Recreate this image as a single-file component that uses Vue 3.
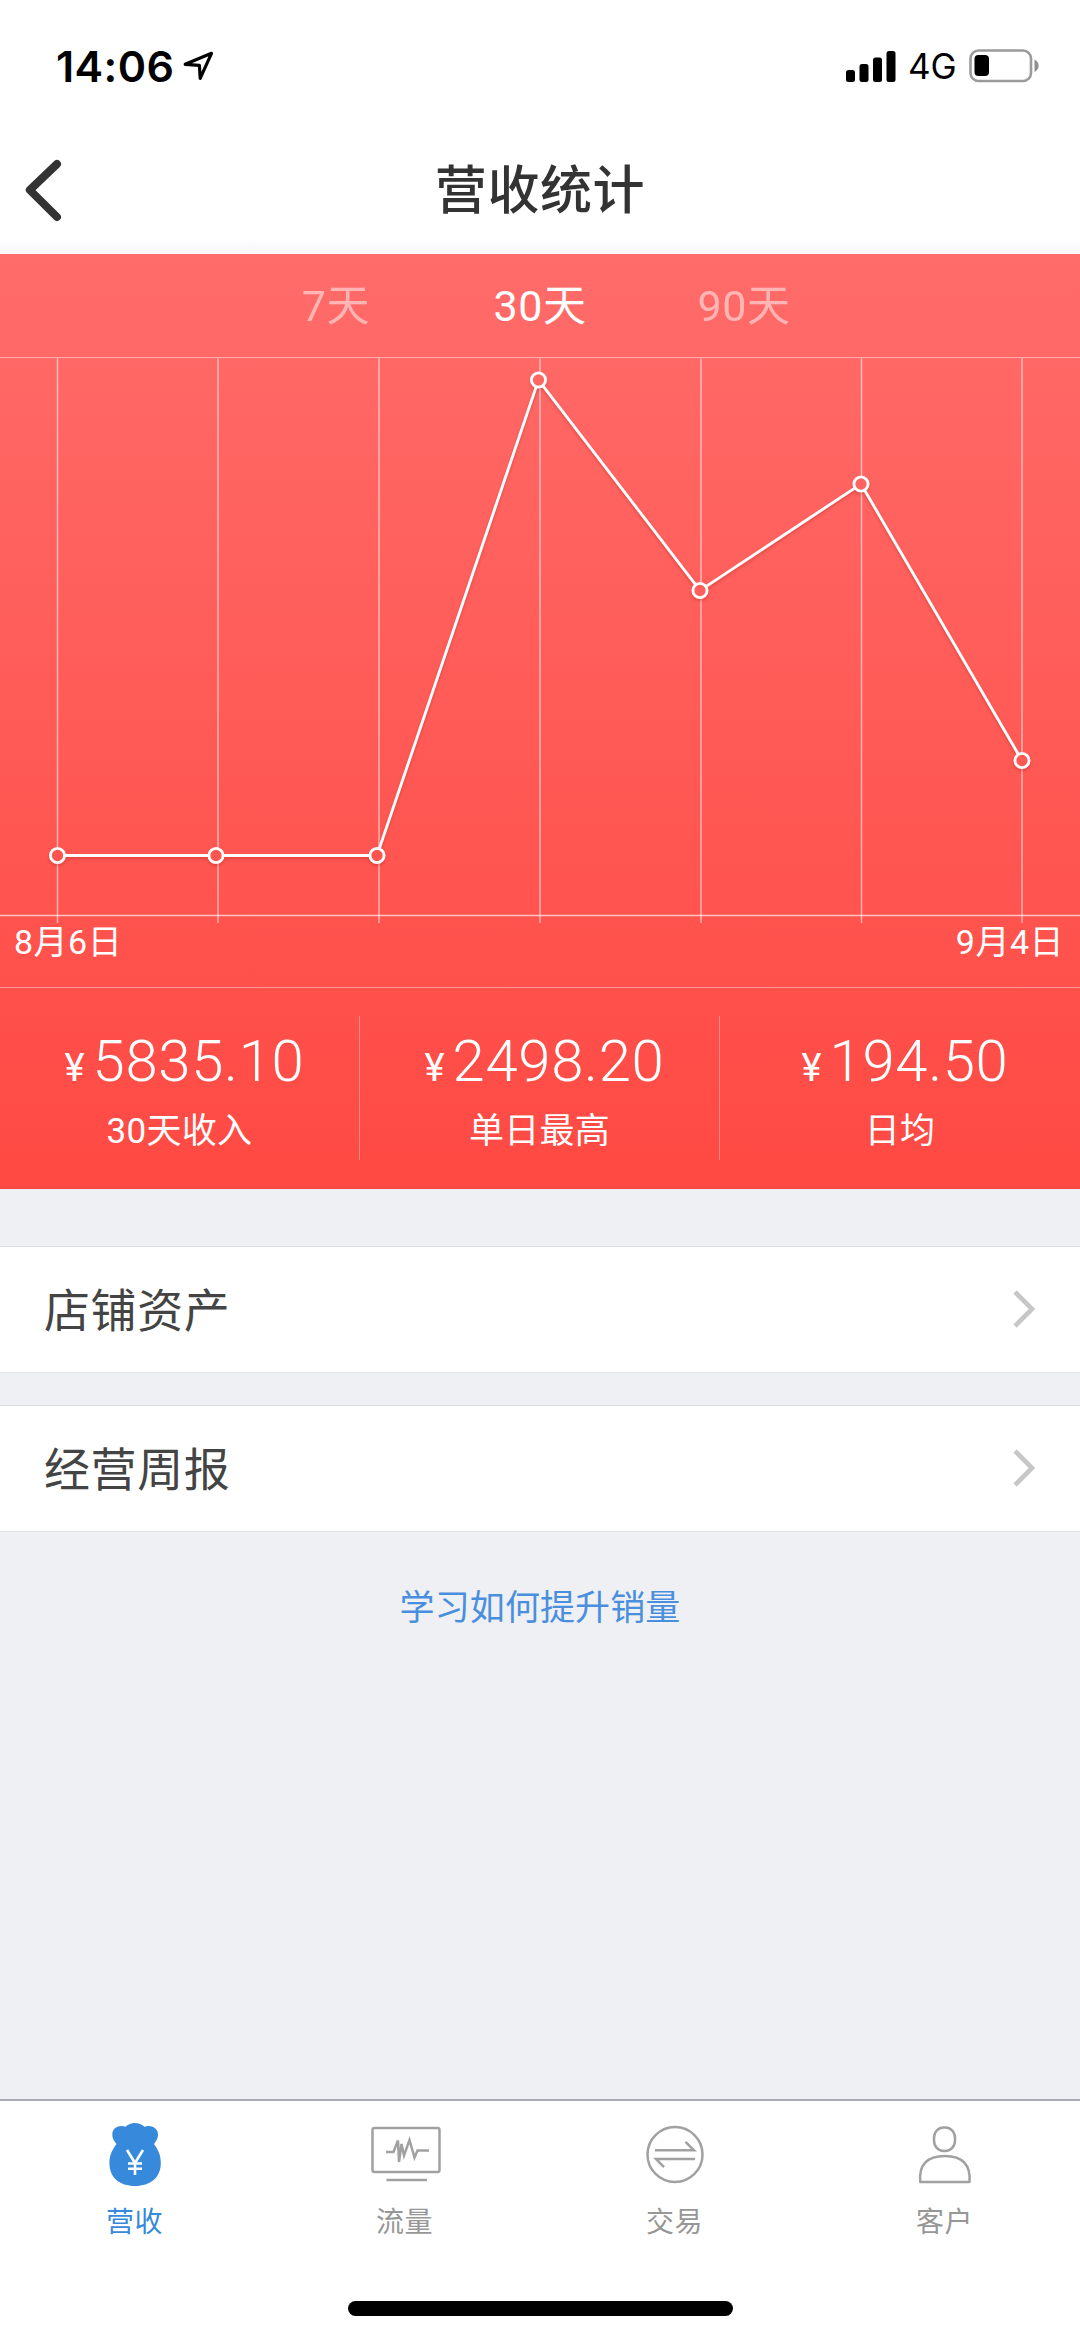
<script setup>
import { computed, ref } from 'vue'

const ranges = ['7天', '30天', '90天']
const activeRange = ref(1)

const gridX = [57.5, 218, 379, 540, 701, 861.5, 1022]
const points = [
  { x: 57.5, y: 497.5 },
  { x: 216, y: 497.5 },
  { x: 377, y: 497.5 },
  { x: 538.5, y: 22 },
  { x: 700, y: 232.5 },
  { x: 861, y: 126 },
  { x: 1022, y: 402.5 },
]

// Marker centres take the panel gradient's colour at their own height.
const markerFill = (y) => {
  const t = (y + 104) / 935
  return `rgb(255, ${Math.round(108 - 35 * t)}, ${Math.round(106 - 39 * t)})`
}

// Segments stop at the rim of each marker so the markers stay hollow.
const segments = computed(() =>
  points.slice(1).map((b, i) => {
    const a = points[i]
    const d = Math.hypot(b.x - a.x, b.y - a.y)
    const ux = ((b.x - a.x) / d) * 7
    const uy = ((b.y - a.y) / d) * 7
    return { x1: a.x + ux, y1: a.y + uy, x2: b.x - ux, y2: b.y - uy }
  }),
)

const stats = [
  { value: '5835.10', label: '30天收入' },
  { value: '2498.20', label: '单日最高' },
  { value: '194.50', label: '日均' },
]
const rows = ['店铺资产', '经营周报']
</script>

<template>
  <div class="screen">
    <div class="status">
      <span class="time">14:06</span>
      <svg class="locate" width="32" height="32" viewBox="0 0 32 32">
        <path d="M2.2 14.3 28.5 3.3 17.2 28.4 16.4 15.4Z" fill="none" stroke="#000" stroke-width="3.2" stroke-linejoin="round" />
      </svg>
      <svg class="signal" width="50" height="31" viewBox="0 0 50 31">
        <rect x="0" y="19" width="9" height="12" rx="2.5" />
        <rect x="13.5" y="13" width="9" height="18" rx="2.5" />
        <rect x="27" y="6.5" width="9" height="24.5" rx="2.5" />
        <rect x="40.5" y="0" width="9" height="31" rx="2.5" />
      </svg>
      <span class="net">4G</span>
      <svg class="battery" width="72" height="34" viewBox="0 0 72 34">
        <rect x="1.5" y="1.5" width="60.5" height="30.5" rx="8" fill="none" stroke="#9b9b9b" stroke-width="2.6" />
        <rect x="5.5" y="6" width="14.5" height="21" rx="4" />
        <path d="M65.5 10.5c5.5 2.5 5.5 10 0 12.5z" fill="#8f8f8f" />
      </svg>
    </div>

    <header class="nav">
      <svg class="back" width="44" height="70" viewBox="0 0 44 70">
        <path d="M36 8 8.8 34 36 61" fill="none" stroke="#333" stroke-width="8" stroke-linecap="round" stroke-linejoin="round" />
      </svg>
      <h1>营收统计</h1>
    </header>

    <section class="panel">
      <div class="ranges">
        <span v-for="(r, i) in ranges" :key="r" class="range" :class="{ on: i === activeRange }">{{ r }}</span>
      </div>
      <svg class="chart" width="1080" height="567" viewBox="0 0 1080 567">
        <g stroke="#fff" stroke-width="1.5" opacity=".55">
          <line v-for="x in gridX" :key="x" :x1="x" y1="0" :x2="x" y2="565" />
        </g>
        <line x1="0" y1="557.5" x2="1080" y2="557.5" stroke="#fff" stroke-width="1.5" opacity=".65" />
        <g class="plot" fill="none" stroke="#fff" stroke-width="2.9">
          <line v-for="(s, i) in segments" :key="i" v-bind="s" />
          <circle v-for="(p, i) in points" :key="i" :cx="p.x" :cy="p.y" r="7.1" :fill="markerFill(p.y)" />
        </g>
      </svg>
      <div class="dates"><span>8月6日</span><span>9月4日</span></div>
      <div class="stats">
        <div v-for="s in stats" :key="s.label" class="stat">
          <div class="amount"><span class="yen">¥</span><span class="num">{{ s.value }}</span></div>
          <div class="caption">{{ s.label }}</div>
        </div>
      </div>
    </section>

    <div class="rows">
      <div v-for="r in rows" :key="r" class="row">
        <span>{{ r }}</span>
        <svg width="26" height="42" viewBox="0 0 26 42">
          <path d="M4 3 21 20 4 37" fill="none" stroke="#c7c7c9" stroke-width="4.6" />
        </svg>
      </div>
    </div>

    <a class="learn">学习如何提升销量</a>

    <nav class="tabs">
      <div class="tab on">
        <svg width="80" height="70" viewBox="0 0 80 70">
          <path d="M17.3 14.6C17.3 7 25 4.5 30.5 6.8 35 1.7 44.8 1.7 49.5 6.8 55 4.5 63 7.3 63 14.6 63 18.5 61.2 21.3 59 24 63.5 30 65.8 35.5 65.8 43 65.8 57.5 55.5 66 40 66S14.4 57.5 14.4 43C14.4 35.5 17 30 21.5 24 19 21.3 17.3 18.5 17.3 14.6Z" fill="#3789dc" />
          <path d="M32 30 40 43 48 30M40 43V55M33 43.5H47M33 48.8H47" fill="none" stroke="#fff" stroke-width="2.6" />
        </svg>
        <span>营收</span>
      </div>
      <div class="tab">
        <svg width="80" height="70" viewBox="0 0 80 70" fill="none" stroke="#a1a1a1" stroke-width="2.5">
          <rect x="7.5" y="8" width="67" height="44" rx="2" />
          <path d="M21 32h7.5L33 20.5 34 42 36.5 24 39 35.5 44.5 20 49.5 37.5 52.5 30.5H64" />
          <path d="M21.5 60H62" />
        </svg>
        <span>流量</span>
      </div>
      <div class="tab">
        <svg width="80" height="70" viewBox="0 0 80 70" fill="none" stroke="#a1a1a1" stroke-width="2.5">
          <circle cx="40" cy="34.5" r="27.5" />
          <path d="M20 30.3H59L50.5 21.8M60 38.9H21L29 47.2" />
        </svg>
        <span>交易</span>
      </div>
      <div class="tab">
        <svg width="80" height="70" viewBox="0 0 80 70" fill="none" stroke="#a1a1a1" stroke-width="2.5">
          <rect x="29" y="7.4" width="21" height="23.6" rx="9.5" ry="10.5" />
          <path d="M15.3 62C13.5 45 22 36 39.8 36S66 45 64.5 62Z" stroke-linejoin="round" />
        </svg>
        <span>客户</span>
      </div>
    </nav>
    <div class="home"><i></i></div>
  </div>
</template>

<style>
body {
  margin: 0;
  background: #eff0f4;
}
</style>

<style scoped>
.screen {
  width: 1080px;
  height: 2339px;
  display: flex;
  flex-direction: column;
  overflow: hidden;
  background: #eff0f4;
  font-family: Roboto, 'Noto Sans CJK SC', sans-serif;
}
.screen svg {
  display: block;
  flex: none;
}
.status {
  height: 132px;
  display: flex;
  align-items: center;
  background: #fff;
  font-family: Inter, sans-serif;
  color: #000;
}
.time {
  width: 126px;
  margin-left: 56px;
  font-size: 43px;
  font-weight: 600;
  letter-spacing: 0.4px;
  line-height: 132px;
}
.locate {
  margin-left: 1px;
}
.signal {
  margin-left: 631px;
}
.net {
  width: 61px;
  margin-left: 12px;
  font-size: 35px;
  line-height: 136px;
}
.nav {
  height: 122px;
  display: flex;
  align-items: center;
  background: linear-gradient(#fff 0 105px, #f6f6fb 122px);
  color: #333;
}
.back {
  margin: 0 0 5px 21px;
}
h1 {
  margin: 0 65px 2px 0;
  flex: 1;
  font-size: 52px;
  font-weight: 500;
  letter-spacing: 0.6px;
  line-height: 80px;
  text-align: center;
}
.panel {
  height: 935px;
  background: linear-gradient(#ff6c6a, #ff4943);
  color: #fff;
}
.ranges {
  height: 103px;
  display: grid;
  grid-template-columns: repeat(3, 204px);
  justify-content: center;
  border-bottom: 1px solid rgba(255, 255, 255, 0.45);
  font-size: 43px;
  letter-spacing: 0.6px;
  line-height: 104px;
  text-align: center;
}
.range {
  opacity: 0.5;
}
.range.on {
  opacity: 1;
}
.plot {
  filter: drop-shadow(0 2px 1.5px rgba(150, 20, 20, 0.3));
}
.dates {
  height: 62px;
  padding: 0 16px 0 14px;
  display: flex;
  justify-content: space-between;
  border-bottom: 1px solid rgba(255, 255, 255, 0.4);
  font-size: 34px;
  letter-spacing: 0.5px;
  line-height: 34px;
}
.stats {
  height: 200px;
  display: grid;
  grid-template-columns: repeat(3, 1fr);
}
.stat {
  height: 144px;
  margin-top: 28px;
  border-right: 1px solid rgba(255, 255, 255, 0.35);
  text-align: center;
}
.stat:last-child {
  border: 0;
}
.amount {
  height: 88px;
  padding-left: 10px;
  display: flex;
  justify-content: center;
  align-items: baseline;
  font-weight: 300;
  line-height: 90px;
}
.yen {
  margin-right: 8px;
  font-size: 38px;
  font-weight: 400;
}
.num {
  font-size: 58px;
  letter-spacing: 0.7px;
}
.caption {
  font-size: 35px;
  letter-spacing: 0.3px;
  line-height: 56px;
}
.rows {
  padding-top: 57px;
  display: flex;
  flex-direction: column;
  gap: 32px;
}
.row {
  height: 125px;
  padding: 0 43px 0 44px;
  display: flex;
  align-items: center;
  justify-content: space-between;
  background: #fff;
  border-top: 1px solid #dcdde2;
  border-bottom: 1px solid #e2e3e6;
  font-size: 46px;
  letter-spacing: 0.6px;
  line-height: 129px;
  color: #444;
}
.row span {
  padding-top: 3px;
}
.learn {
  margin-top: 51px;
  font-size: 35px;
  letter-spacing: 0.1px;
  line-height: 52px;
  text-align: center;
  color: #4a8fdd;
}
.tabs {
  height: 140px;
  margin-top: auto;
  display: grid;
  grid-template-columns: repeat(4, 1fr);
  border-top: 2px solid #aaaab0;
  background: #fff;
  color: #979797;
}
.tab {
  padding-top: 19px;
  display: flex;
  flex-direction: column;
  align-items: center;
  font-size: 28px;
  letter-spacing: 0.6px;
  line-height: 40px;
}
.tab span {
  margin-top: 13px;
  margin-right: 1px;
}
.tab.on {
  color: #3789dc;
}
.home {
  height: 98px;
  display: flex;
  justify-content: center;
  background: #fff;
}
.home i {
  width: 385px;
  height: 15px;
  margin-top: 60px;
  border-radius: 8px;
  background: #000;
}
</style>
